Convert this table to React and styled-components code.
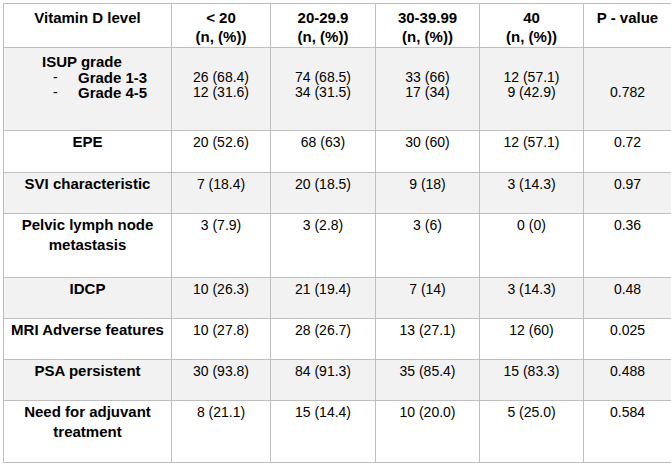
import React from "react";
import styled, { createGlobalStyle } from "styled-components";

const Global = createGlobalStyle`
  html, body { margin: 0; padding: 0; background: #ffffff; overflow: hidden; }
  body { font-family: "Liberation Sans", Arial, sans-serif; color: #000; }
`;

const Page = styled.div`
  width: 671px;
  height: 464px;
  padding: 3px 0 0 3px;
  box-sizing: border-box;
  overflow: hidden;
`;

const Table = styled.div`
  display: flex;
  flex-direction: column;
  width: 669px;
  border-top: 1px solid #bfbfbf;
  border-left: 1px solid #bfbfbf;
`;

const Row = styled.div`
  display: grid;
  grid-template-columns: 168px 99px 105px 104px 104px 88px;
  height: ${(p) => p.$h}px;
  box-sizing: border-box;
  border-bottom: 1px solid #bfbfbf;
  background: ${(p) => (p.$shade ? "#f2f2f2" : "#ffffff")};
`;

const Cell = styled.div`
  border-right: 1px solid #bfbfbf;
  padding: ${(p) => p.$pt ?? 1}px 6px 0;
  text-align: ${(p) => p.$align || "center"};
  font-size: ${(p) => (p.$bold ? 15 : 14)}px;
  font-weight: ${(p) => (p.$bold ? 700 : 400)};
  line-height: ${(p) => p.$lh || 20}px;
  white-space: nowrap;
  overflow: hidden;
`;

const Line = styled.div`
  min-height: 1px;
`;

const IsupCell = styled.div`
  border-right: 1px solid #bfbfbf;
  padding: 6px 0 0 38px;
  font-size: 15px;
  font-weight: 700;
  line-height: 15.5px;
  white-space: nowrap;
`;

const GradeItem = styled.div`
  display: flex;
  padding-left: 11px;
`;

const Dash = styled.span`
  width: 25px;
  font-weight: 400;
  font-size: 14px;
`;

const header = ["< 20", "20-29.9", "30-39.99", "40"];

const rows = [
  { label: ["EPE"], vals: ["20 (52.6)", "68 (63)", "30 (60)", "12 (57.1)", "0.72"], h: 42, shade: false },
  { label: ["SVI characteristic"], vals: ["7 (18.4)", "20 (18.5)", "9 (18)", "3 (14.3)", "0.97"], h: 41, shade: true },
  { label: ["Pelvic lymph node", "metastasis"], vals: ["3 (7.9)", "3 (2.8)", "3 (6)", "0 (0)", "0.36"], h: 64, shade: false },
  { label: ["IDCP"], vals: ["10 (26.3)", "21 (19.4)", "7 (14)", "3 (14.3)", "0.48"], h: 41, shade: true },
  { label: ["MRI Adverse features"], vals: ["10 (27.8)", "28 (26.7)", "13 (27.1)", "12 (60)", "0.025"], h: 41, shade: false },
  { label: ["PSA persistent"], vals: ["30 (93.8)", "84 (91.3)", "35 (85.4)", "15 (83.3)", "0.488"], h: 41, shade: true },
  { label: ["Need for adjuvant", "treatment"], vals: ["8 (21.1)", "15 (14.4)", "10 (20.0)", "5 (25.0)", "0.584"], h: 62, shade: false },
];

const isup = [
  ["26 (68.4)", "12 (31.6)"],
  ["74 (68.5)", "34 (31.5)"],
  ["33 (66)", "17 (34)"],
  ["12 (57.1)", "9 (42.9)"],
];

export default function App() {
  return (
    <Page>
      <Global />
      <Table>
        <Row $h={44}>
          <Cell $bold $pt={4} $lh={19}>Vitamin D level</Cell>
          {header.map((h) => (
            <Cell key={h} $bold $pt={4} $lh={19}>
              <Line>{h}</Line>
              <Line>(n, (%))</Line>
            </Cell>
          ))}
          <Cell $bold $pt={4} $lh={19}>P - value</Cell>
        </Row>

        <Row $h={83} $shade>
          <IsupCell>
            <Line>ISUP grade</Line>
            <GradeItem><Dash>-</Dash>Grade 1-3</GradeItem>
            <GradeItem><Dash>-</Dash>Grade 4-5</GradeItem>
          </IsupCell>
          {isup.map((v, i) => (
            <Cell key={i} $pt={6} $lh={15.5}>
              <Line>&nbsp;</Line>
              <Line>{v[0]}</Line>
              <Line>{v[1]}</Line>
            </Cell>
          ))}
          <Cell $pt={6} $lh={15.5}>
            <Line>&nbsp;</Line>
            <Line>&nbsp;</Line>
            <Line>0.782</Line>
          </Cell>
        </Row>

        {rows.map((r) => (
          <Row key={r.label[0]} $h={r.h} $shade={r.shade}>
            <Cell $bold>
              {r.label.map((l) => (
                <Line key={l}>{l}</Line>
              ))}
            </Cell>
            {r.vals.map((v, i) => (
              <Cell key={i}>{v}</Cell>
            ))}
          </Row>
        ))}
      </Table>
    </Page>
  );
}
